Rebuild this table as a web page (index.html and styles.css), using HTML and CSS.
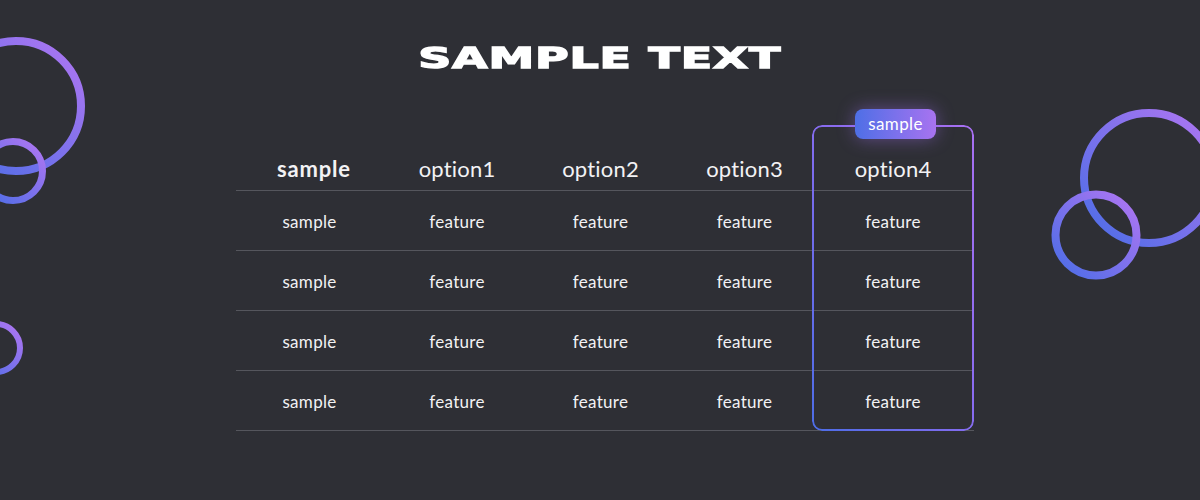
FILE: index.html
```html
<!DOCTYPE html>
<html lang="en">
<head>
<meta charset="utf-8">
<title>Sample Text</title>
<link rel="stylesheet" href="styles.css">
</head>
<body>
<div class="page">
  <svg class="decor" width="1200" height="500" viewBox="0 0 1200 500" aria-hidden="true">
    <defs>
      <linearGradient id="ring" x1="0" y1="1" x2="1" y2="0">
        <stop offset="0" stop-color="#4a6de6"/>
        <stop offset="1" stop-color="#b176f2"/>
      </linearGradient>
    </defs>
    <circle cx="16" cy="106" r="65" fill="none" stroke="url(#ring)" stroke-width="8"/>
    <circle cx="13" cy="171" r="29.5" fill="none" stroke="url(#ring)" stroke-width="7"/>
    <circle cx="-4" cy="348" r="24" fill="none" stroke="url(#ring)" stroke-width="6"/>
    <circle cx="1149" cy="178" r="65" fill="none" stroke="url(#ring)" stroke-width="8"/>
    <circle cx="1096" cy="235" r="40.5" fill="none" stroke="url(#ring)" stroke-width="8"/>
  </svg>

  <h1 class="title"><span class="title-text">SAMPLE TEXT</span></h1>

  <div class="table">
    <div class="highlight"><span class="badge">sample</span></div>
    <div class="row head">
      <div class="cell first">sample</div>
      <div class="cell">option1</div>
      <div class="cell">option2</div>
      <div class="cell">option3</div>
      <div class="cell">option4</div>
    </div>
    <div class="row">
      <div class="cell first">sample</div>
      <div class="cell">feature</div>
      <div class="cell">feature</div>
      <div class="cell">feature</div>
      <div class="cell">feature</div>
    </div>
    <div class="row">
      <div class="cell first">sample</div>
      <div class="cell">feature</div>
      <div class="cell">feature</div>
      <div class="cell">feature</div>
      <div class="cell">feature</div>
    </div>
    <div class="row">
      <div class="cell first">sample</div>
      <div class="cell">feature</div>
      <div class="cell">feature</div>
      <div class="cell">feature</div>
      <div class="cell">feature</div>
    </div>
    <div class="row">
      <div class="cell first">sample</div>
      <div class="cell">feature</div>
      <div class="cell">feature</div>
      <div class="cell">feature</div>
      <div class="cell">feature</div>
    </div>
  </div>
</div>
</body>
</html>
```

FILE: styles.css
```css
html, body {
  margin: 0;
  padding: 0;
}

body {
  background: #2e2f35;
  font-family: Lato, "Noto Sans", sans-serif;
  color: #f2f2f4;
}

.page {
  position: relative;
  width: 1200px;
  height: 500px;
  overflow: hidden;
}

.decor {
  position: absolute;
  left: 0;
  top: 0;
  pointer-events: none;
}

.title {
  margin: 0;
  padding-top: 45px;
  height: 28px;
  text-align: center;
  font-family: "DejaVu Sans", sans-serif;
  font-weight: 700;
  font-size: 28px;
  line-height: 28px;
  letter-spacing: 0.5px;
  color: #ffffff;
  -webkit-text-stroke: 1.3px #ffffff;
}

.title-text {
  display: inline-block;
  transform: scaleX(1.64);
}

.table {
  position: relative;
  width: 738px;
  margin: 52px 0 0 236px;
}

.row {
  display: grid;
  grid-template-columns: 149px 144px 143px 140px 162px;
  height: 59px;
  border-bottom: 1px solid #55565d;
  align-items: center;
  font-size: 17px;
  letter-spacing: 0.3px;
}

.row .cell {
  padding-top: 3px;
}

.row .cell:nth-child(4) {
  padding-left: 5px;
}

.row.head {
  height: 65px;
  align-items: end;
  font-size: 22px;
  letter-spacing: 0.2px;
}

.row.head .cell {
  padding-top: 0;
  padding-bottom: 8px;
}

.row.head .cell.first {
  font-weight: 700;
  font-size: 22px;
  letter-spacing: 0.8px;
  padding-left: 7px;
  padding-right: 0;
}

.cell {
  text-align: center;
  line-height: 1.2;
}

.cell.first {
  padding-right: 2px;
}

.highlight {
  position: absolute;
  left: 576px;
  top: 0;
  width: 162px;
  height: 306px;
  border-radius: 10px;
}

.highlight::before {
  content: "";
  position: absolute;
  inset: 0;
  padding: 2px;
  border-radius: 10px;
  background: linear-gradient(to top right, #4d6de6, #8a6cf0 55%, #a870f2);
  -webkit-mask: linear-gradient(#000 0 0) content-box, linear-gradient(#000 0 0);
  -webkit-mask-composite: xor;
  mask-composite: exclude;
}

.badge {
  position: absolute;
  left: 43px;
  top: -16px;
  width: 81px;
  height: 30px;
  border-radius: 8px;
  background: linear-gradient(to right, #4e6fe6, #a873f0);
  box-shadow: 0 0 18px rgba(160, 110, 240, 0.45);
  color: #ffffff;
  font-size: 17px;
  letter-spacing: 0.4px;
  line-height: 29px;
  text-align: center;
}
```
